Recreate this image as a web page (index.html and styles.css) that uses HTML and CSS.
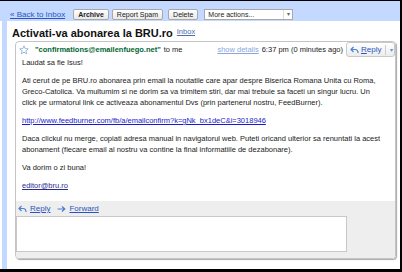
FILE: index.html
```html
<!DOCTYPE html>
<html lang="ro">
<head>
  <meta charset="UTF-8" />
  <title>Activati-va abonarea la BRU.ro</title>
  <link rel="stylesheet" href="styles.css">
</head>
<body>
  <div class="frame">
    <div class="toolbar">
      <a class="back" href="#">« Back to Inbox</a>
      <button class="btn archive">Archive</button>
      <button class="btn spam">Report Spam</button>
      <button class="btn delete">Delete</button>
      <div class="select">
        <span class="select-text">More actions...</span>
        <span class="select-caret">▾</span>
      </div>
    </div>

    <div class="main">
      <div class="rail"></div>
      <div class="content">
        <div class="subject">
          <h1>Activati-va abonarea la BRU.ro</h1>
          <a class="label" href="#">Inbox</a>
        </div>

        <div class="card">
          <div class="msg-head">
            <svg class="star" width="10" height="10" viewBox="0 0 10 10">
              <path d="M5 0.8 L6.2 3.6 L9.2 3.8 L6.9 5.8 L7.6 8.8 L5 7.2 L2.4 8.8 L3.1 5.8 L0.8 3.8 L3.8 3.6 Z" fill="#fff" stroke="#8fb0e0" stroke-width="0.9" stroke-linejoin="round"/>
            </svg>
            <span class="from">"confirmations@emailenfuego.net"</span>
            <span class="to">to me</span>
            <div class="head-right">
              <a class="details" href="#">show details</a>
              <span class="time">6:37 pm (0 minutes ago)</span>
              <div class="reply-btn">
                <svg width="9" height="8" viewBox="0 0 9 8">
                  <path d="M3.5 1 L1 3.5 L3.5 6 M1 3.5 H5 Q8 3.5 8 7" fill="none" stroke="#4f7fd0" stroke-width="1.2"/>
                </svg>
                <span class="reply-text"><u>R</u>eply</span>
                <span class="sep"></span>
                <span class="reply-caret">▾</span>
              </div>
            </div>
          </div>

          <div class="msg-body">
            <p>Laudat sa fie Isus!</p>
            <p>Ati cerut de pe BRU.ro abonarea prin email la noutatile care apar despre Biserica Romana Unita cu Roma,<br>
            Greco-Catolica. Va multumim si ne dorim sa va trimitem stiri, dar mai trebuie sa faceti un singur lucru. Un<br>
            click pe urmatorul link ce activeaza abonamentul Dvs (prin partenerul nostru, FeedBurner).</p>
            <p><a class="link" href="#">http://www.feedburner.com/fb/a/emailconfirm?k=gNk_bx1deC&amp;i=3018946</a></p>
            <p>Daca clickul nu merge, copiati adresa manual in navigatorul web. Puteti oricand ulterior sa renuntati la acest<br>
            abonament (fiecare email al nostru va contine la final informatiile de dezabonare).</p>
            <p>Va dorim o zi buna!</p>
            <p><a class="mail" href="#">editor@bru.ro</a></p>
          </div>

          <div class="msg-foot">
            <div class="actions">
              <svg width="9" height="8" viewBox="0 0 9 8">
                <path d="M3.5 1 L1 3.5 L3.5 6 M1 3.5 H5 Q8 3.5 8 7" fill="none" stroke="#4f7fd0" stroke-width="1.2"/>
              </svg>
              <a href="#">Reply</a>
              <svg class="fwd" width="9" height="8" viewBox="0 0 9 8">
                <path d="M0.5 4 H7.5 M5 1.5 L7.8 4 L5 6.5" fill="none" stroke="#4f7fd0" stroke-width="1.2"/>
              </svg>
              <a href="#">Forward</a>
            </div>
            <div class="reply-box"></div>
          </div>
        </div>
      </div>
    </div>
  </div>
</body>
</html>
```

FILE: styles.css
```css
* {
  margin: 0;
  padding: 0;
  box-sizing: border-box;
}
body {
  background: #000;
  font-family: 'Liberation Sans', Arial, sans-serif;
  font-size: 7.5px;
  color: #222;
}
.frame {
  height: 100vh;
  display: flex;
  flex-direction: column;
  background: #fff;
  border-top: 1px solid #000;
  border-right: 2px solid #000;
  border-bottom: 3px solid #000;
}
.toolbar {
  height: 20px;
  flex-shrink: 0;
  display: flex;
  align-items: center;
  padding: 7px 0 0 10px;
  background: #c3d9ff;
}
.back {
  font-size: 8px;
  color: #2a55c0;
  margin-right: 8px;
}
.btn {
  height: 11px;
  padding: 0 4px;
  font-family: inherit;
  font-size: 7px;
  color: #222;
  background: linear-gradient(#fff, #e8e8e8);
  border: 1px solid #a8a8a8;
  border-radius: 2px;
}
.archive {
  font-weight: bold;
  margin-right: 3px;
}
.spam {
  margin-right: 5px;
}
.delete {
  margin-right: 6px;
}
.select {
  width: 89px;
  height: 11px;
  display: flex;
  background: #fff;
  border: 1px solid #a8a8a8;
  font-size: 7px;
}
.select-text {
  flex: 1;
  padding-left: 3px;
  line-height: 9px;
}
.select-caret {
  width: 9px;
  text-align: center;
  font-size: 6px;
  line-height: 9px;
  color: #666;
  border-left: 1px solid #ddd;
}
.main {
  flex: 1;
  display: flex;
  padding-left: 2px;
}
.rail {
  width: 5px;
  background: #c3d9ff;
}
.content {
  flex: 1;
  padding: 0 4px 0 8px;
}
.subject {
  height: 20px;
  display: flex;
  align-items: center;
  gap: 4px;
  padding: 3px 0 0 0;
  margin-left: -3px;
}
h1 {
  font-size: 11px;
  font-weight: bold;
  color: #111;
}
.label {
  font-size: 7.5px;
  color: #4f6fae;
  margin-top: -2px;
}
.card {
  border: 1px solid #c4c4c4;
  border-radius: 4px;
  box-shadow: 1px 1px 1px #aaa;
  overflow: hidden;
}
.msg-head {
  height: 15px;
  display: flex;
  align-items: center;
  padding-left: 3px;
}
.star {
  margin-right: 6px;
}
.from {
  font-weight: bold;
  color: #006633;
  margin-right: 3px;
}
.head-right {
  margin-left: auto;
  display: flex;
  align-items: center;
  height: 15px;
}
.details {
  color: #8aa6dd;
  margin-right: 3px;
}
.time {
  margin-right: 3px;
}
.reply-btn {
  height: 15px;
  width: 49px;
  display: flex;
  align-items: center;
  gap: 2px;
  padding-left: 3px;
  background: linear-gradient(#fff, #ececec);
  border: 1px solid #c8c8c8;
  border-radius: 3px;
}
.reply-text {
  font-size: 8px;
  color: #2a55c0;
}
.sep {
  width: 1px;
  height: 10px;
  margin-left: 2px;
  background: #ccc;
}
.reply-caret {
  font-size: 6px;
  color: #6a8bc5;
  margin-left: 2px;
}
.msg-body {
  padding: 0 6px 10px 6px;
  line-height: 11px;
}
.msg-body p {
  margin-bottom: 7px;
}
.msg-body p:last-child {
  margin-bottom: 0;
}
.link {
  color: #1a1acc;
}
.mail {
  color: #2b2b8c;
}
.msg-foot {
  background: #eeeeee;
  padding: 1px 48px 6px 0;
}
.actions {
  height: 13px;
  display: flex;
  align-items: center;
  gap: 3px;
  padding-left: 2px;
  margin-bottom: 1px;
}
.actions a {
  font-size: 8px;
  color: #2a55c0;
}
.fwd {
  margin-left: 4px;
}
.reply-box {
  height: 36px;
  background: #fff;
  border: 1px solid #c8c8c8;
}
```
